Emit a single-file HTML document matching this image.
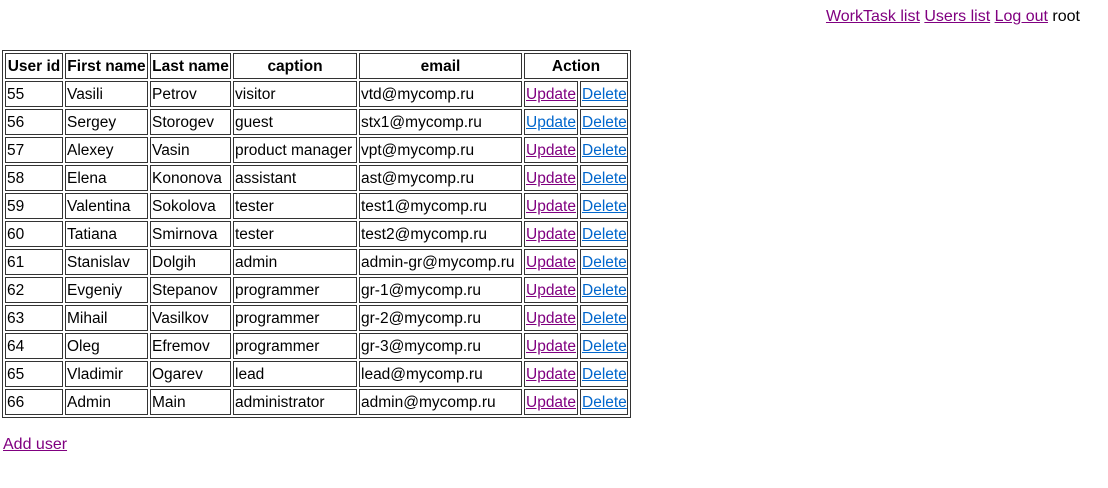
<!DOCTYPE html>
<html><head><meta charset="utf-8"><style>
body{margin:0;font-family:"Liberation Sans",sans-serif;font-size:16px;color:#000;background:#fff;}
a{color:#800080;}
a.b{color:#0066cc;}
.top{position:absolute;right:28px;top:8px;white-space:nowrap;}
table{position:absolute;left:2px;top:50px;border:1px solid #333;border-spacing:2px;table-layout:fixed;width:629px;font-size:15.5px;}
td,th{border:1px solid #333;padding:2px 1px 0 1px;height:22px;white-space:nowrap;overflow:hidden;text-align:left;font-weight:normal;}
th{font-weight:bold;text-align:center;}
.add{position:absolute;left:3px;top:436px;}
</style></head><body>
<div class="top"><a href="#">WorkTask list</a> <a href="#">Users list</a> <a href="#">Log out</a> root</div>
<table>
<colgroup><col style="width:58px"><col style="width:83px"><col style="width:81px"><col style="width:124px"><col style="width:163px"><col style="width:54px"><col style="width:48px"></colgroup>
<tr><th>User id</th><th>First name</th><th>Last name</th><th>caption</th><th>email</th><th colspan="2">Action</th></tr>
<tr><td>55</td><td>Vasili</td><td>Petrov</td><td>visitor</td><td>vtd@mycomp.ru</td><td><a href="#">Update</a></td><td><a class="b" href="#">Delete</a></td></tr>
<tr><td>56</td><td>Sergey</td><td>Storogev</td><td>guest</td><td>stx1@mycomp.ru</td><td><a class="b" href="#">Update</a></td><td><a class="b" href="#">Delete</a></td></tr>
<tr><td>57</td><td>Alexey</td><td>Vasin</td><td>product manager</td><td>vpt@mycomp.ru</td><td><a href="#">Update</a></td><td><a class="b" href="#">Delete</a></td></tr>
<tr><td>58</td><td>Elena</td><td>Kononova</td><td>assistant</td><td>ast@mycomp.ru</td><td><a href="#">Update</a></td><td><a class="b" href="#">Delete</a></td></tr>
<tr><td>59</td><td>Valentina</td><td>Sokolova</td><td>tester</td><td>test1@mycomp.ru</td><td><a href="#">Update</a></td><td><a class="b" href="#">Delete</a></td></tr>
<tr><td>60</td><td>Tatiana</td><td>Smirnova</td><td>tester</td><td>test2@mycomp.ru</td><td><a href="#">Update</a></td><td><a class="b" href="#">Delete</a></td></tr>
<tr><td>61</td><td>Stanislav</td><td>Dolgih</td><td>admin</td><td>admin-gr@mycomp.ru</td><td><a href="#">Update</a></td><td><a class="b" href="#">Delete</a></td></tr>
<tr><td>62</td><td>Evgeniy</td><td>Stepanov</td><td>programmer</td><td>gr-1@mycomp.ru</td><td><a href="#">Update</a></td><td><a class="b" href="#">Delete</a></td></tr>
<tr><td>63</td><td>Mihail</td><td>Vasilkov</td><td>programmer</td><td>gr-2@mycomp.ru</td><td><a href="#">Update</a></td><td><a class="b" href="#">Delete</a></td></tr>
<tr><td>64</td><td>Oleg</td><td>Efremov</td><td>programmer</td><td>gr-3@mycomp.ru</td><td><a href="#">Update</a></td><td><a class="b" href="#">Delete</a></td></tr>
<tr><td>65</td><td>Vladimir</td><td>Ogarev</td><td>lead</td><td>lead@mycomp.ru</td><td><a href="#">Update</a></td><td><a class="b" href="#">Delete</a></td></tr>
<tr><td>66</td><td>Admin</td><td>Main</td><td>administrator</td><td>admin@mycomp.ru</td><td><a href="#">Update</a></td><td><a class="b" href="#">Delete</a></td></tr>
</table>
<div class="add"><a href="#">Add user</a></div>
</body></html>
